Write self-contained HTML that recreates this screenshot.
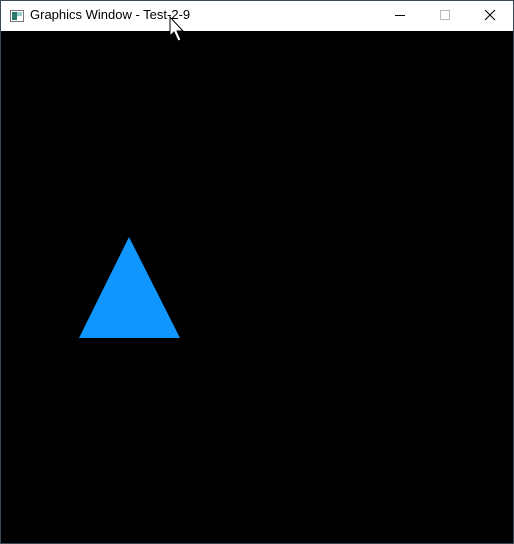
<!DOCTYPE html>
<html><head><style>
html,body{margin:0;padding:0;width:514px;height:544px;overflow:hidden;background:#fff}
.win{position:absolute;left:0;top:0;width:512px;height:542px;border:1px solid #3c4a55;background:#000}
.title{position:absolute;left:0;top:0;width:512px;height:30px;background:#fff}
.t{position:absolute;left:29px;top:6px;font:13px "Liberation Sans",sans-serif;color:#000}
</style></head><body>
<div class="win">
<div class="title">
<svg width="512" height="30" style="position:absolute;left:0;top:0">
<rect x="9.5" y="9.5" width="13" height="11" fill="#fff" stroke="#777"/>
<rect x="11" y="11" width="5" height="8" fill="#2a7a6a"/>
<rect x="16" y="11" width="5" height="4" fill="#9cc"/>
<line x1="394" y1="14.5" x2="404" y2="14.5" stroke="#000"/>
<rect x="439.5" y="9.5" width="9" height="9" fill="none" stroke="#bbb"/>
<path d="M484 9L494 19M494 9L484 19" stroke="#000" stroke-width="1.1"/>
</svg>
<div class="t">Graphics Window - Test-2-9</div>
</div>
<svg width="512" height="542" style="position:absolute;left:0;top:0;pointer-events:none">
<polygon points="128,236 78,337 179,337" fill="#0f97ff"/>
<path d="M169 16L169 35L173 31L177 40L180 39L176 30L182 30Z" fill="#fff" stroke="#000"/>
</svg>
</div>
</body></html>
